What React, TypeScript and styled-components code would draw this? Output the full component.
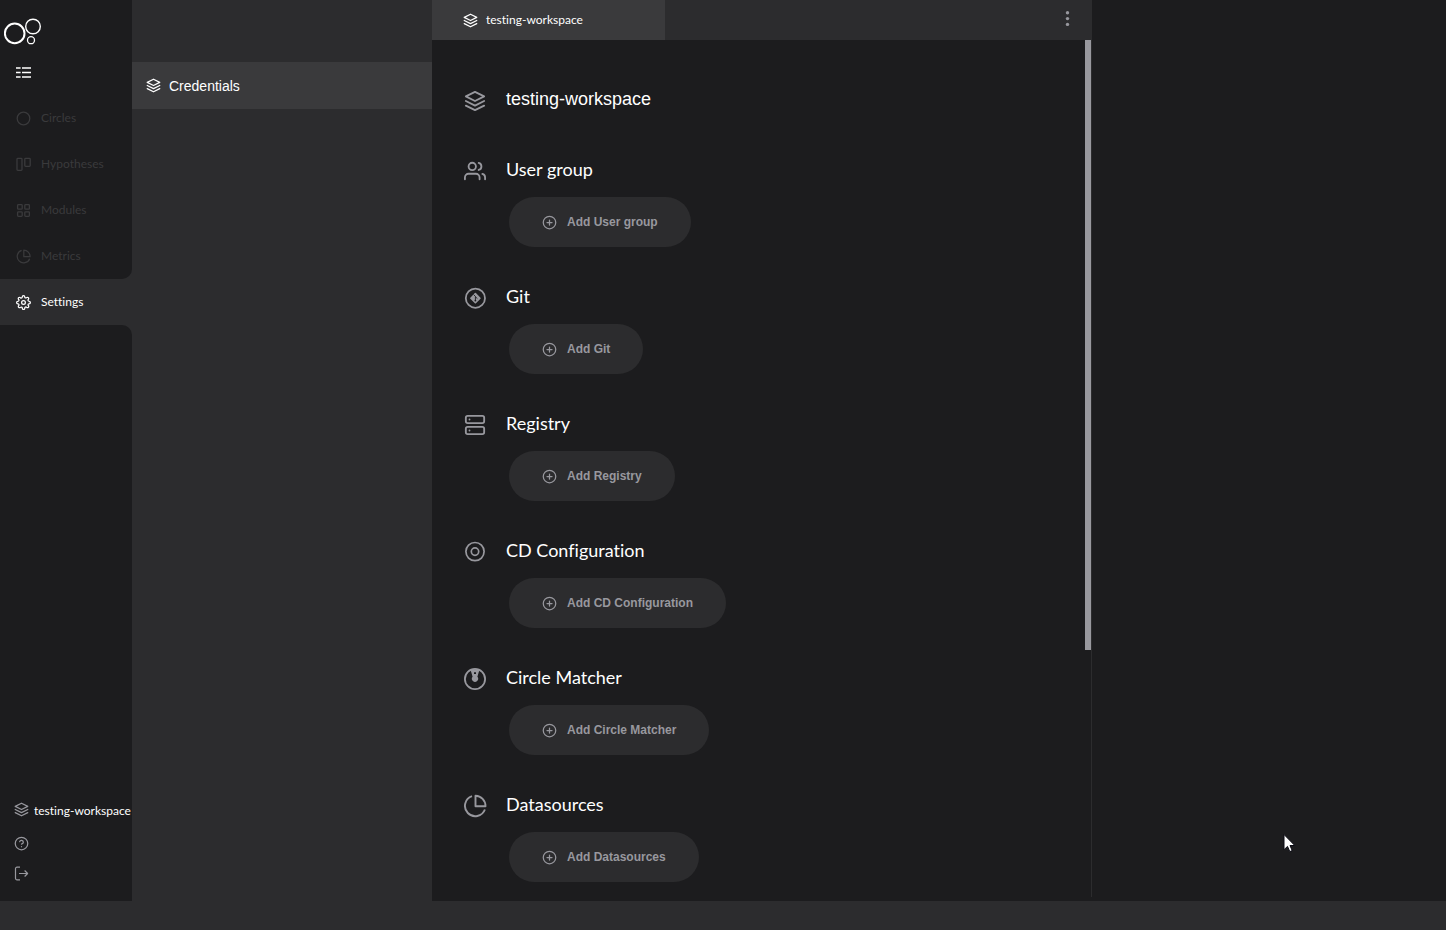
import React from 'react';
import styled, { createGlobalStyle } from 'styled-components';
import {
  FiHelpCircle,
  FiLayers,
  FiPlusCircle,
  FiServer,
  FiSettings,
  FiUsers,
} from 'react-icons/fi';

const color = {
  base: '#1c1c1e',
  surface: '#2c2c2e',
  raised: '#3a3a3c',
  muted: '#98989e',
  text: '#ffffff',
};

const lato = `Lato, 'Liberation Sans', sans-serif`;
const arial = `'Liberation Sans', Arial, sans-serif`;

const GlobalStyle = createGlobalStyle`
  * { box-sizing: border-box; }
  body {
    margin: 0;
    background: ${color.surface};
    color: ${color.text};
    font-family: ${lato};
    font-variant-ligatures: none;
  }
  h1, h2, ul, p { margin: 0; padding: 0; font-weight: 400; }
  ul { list-style: none; }
  a { color: inherit; text-decoration: none; }
  button {
    border: 0;
    padding: 0;
    background: none;
    color: inherit;
    font-variant-ligatures: none;
    cursor: pointer;
  }
  svg { display: block; flex: none; }
`;

const Page = styled.div`
  display: flex;
  flex-direction: column;
  height: 100vh;
  overflow: hidden;
`;

const Workspace = styled.div`
  display: flex;
  flex: 1;
  min-height: 0;
`;

const StatusBar = styled.footer`
  height: 29px;
  flex: none;
  background: ${color.surface};
`;

const Sidebar = styled.aside`
  display: flex;
  flex-direction: column;
  width: 132px;
  flex: none;
  background: ${color.surface};
`;

const Brand = styled.div`
  height: 95px;
  padding: 18px 4px 0;
  background: ${color.base};
`;

const MenuToggle = styled.button`
  display: block;
  margin: 20px 12px 0;
`;

const NavLink = styled.a<{ $active?: boolean; $rounded?: boolean }>`
  display: flex;
  align-items: center;
  gap: 10px;
  height: 46px;
  padding: 0 16px;
  font-size: 12px;
  line-height: 16px;
  border-bottom-right-radius: ${({ $rounded }) => ($rounded ? '10px' : '0')};
  background: ${({ $active }) => ($active ? color.surface : color.base)};
  && { color: ${({ $active }) => ($active ? color.text : color.raised)}; }
`;

const SidebarFooter = styled.div`
  display: flex;
  flex: 1;
  flex-direction: column;
  justify-content: flex-end;
  gap: 15px;
  padding: 0 0 20px 14px;
  border-top-right-radius: 10px;
  background: ${color.base};
  color: ${color.muted};
`;

const CurrentWorkspace = styled.a`
  display: flex;
  align-items: flex-start;
  gap: 5px;
  height: 19px;
  font-size: 12px;
  line-height: 18px;
  white-space: nowrap;
`;

const Label = styled.span`
  color: ${color.text};
`;

const IconButton = styled.button`
  display: flex;
  width: 15px;
  height: 15px;
`;

const Submenu = styled.nav`
  width: 300px;
  flex: none;
  padding-top: 62px;
  background: ${color.surface};
`;

const SubmenuLink = styled.a`
  display: flex;
  align-items: center;
  gap: 8px;
  height: 47px;
  padding: 0 14px;
  background: ${color.raised};
  font-family: ${arial};
  font-size: 14px;
  line-height: 16px;
`;

const Content = styled.main`
  flex: 1;
  min-width: 0;
  padding-bottom: 4px;
  background: ${color.base};
`;

const Panel = styled.section`
  display: flex;
  flex-direction: column;
  width: 660px;
  max-width: 100%;
  height: 100%;
`;

const TabBar = styled.header`
  display: flex;
  align-items: center;
  justify-content: space-between;
  height: 40px;
  flex: none;
  padding-right: 17px;
  background: ${color.surface};
`;

const Tab = styled.button`
  display: flex;
  align-items: center;
  gap: 8px;
  width: 233px;
  height: 40px;
  && { padding: 0 31px; background: ${color.raised}; }
  font-family: ${lato};
  font-size: 12px;
  line-height: 16px;
`;

const PanelBody = styled.div`
  display: flex;
  flex: 1;
  min-height: 0;
  border-right: 1px solid ${color.surface};
`;

const Sections = styled.div`
  display: flex;
  flex: 1;
  flex-direction: column;
  gap: 39px;
  padding: 49px 31px 0;
  overflow: hidden;
`;

const ScrollTrack = styled.div`
  width: 6px;
  flex: none;
`;

const ScrollThumb = styled.div`
  height: 71.2%;
  background: ${color.muted};
`;

const TitleRow = styled.div<{ $lead?: boolean }>`
  display: flex;
  align-items: center;
  gap: 19px;
  height: 24px;
  margin-bottom: ${({ $lead }) => ($lead ? '7px' : '0')};
  color: ${color.muted};
`;

const IconSlot = styled.span`
  display: flex;
  align-items: center;
  justify-content: center;
  width: 24px;
  height: 24px;
`;

const Title = styled.h2<{ $plain?: boolean }>`
  padding-bottom: 4px;
  color: ${color.text};
  font-family: ${({ $plain }) => ($plain ? arial : lato)};
  font-size: 18px;
  line-height: 22px;
`;

const AddButton = styled.button`
  display: flex;
  align-items: center;
  gap: 10px;
  height: 50px;
  margin: 14px 0 0 46px;
  && { padding: 0 33px; background: ${color.surface}; color: ${color.muted}; }
  border-radius: 25px;
  font-family: ${arial};
  font-size: 12px;
  font-weight: 700;
  line-height: 16px;
`;

const Pointer = styled.svg`
  position: absolute;
  left: 1283px;
  top: 833px;
`;

const Logo = () => (
  <svg width="38" height="28" viewBox="0 0 38 28" fill="none" stroke="#fff" role="img" aria-label="Home">
    <circle cx="10.7" cy="15.4" r="9.8" strokeWidth="2" />
    <circle cx="29" cy="8.5" r="7.3" strokeWidth="1.4" />
    <circle cx="27" cy="22.2" r="3.5" strokeWidth="1.3" />
  </svg>
);

const ListIcon = () => (
  <svg width="15" height="13" viewBox="0 0 15 13" stroke="#fff" strokeWidth="1.3">
    <path d="M0 2h4.6M6 2h9M0 6.5h4.6M6 6.5h9M0 11h4.6M6 11h9" />
  </svg>
);

const CirclesIcon = () => (
  <svg width="15" height="15" viewBox="0 0 15 15" fill="none" stroke="currentColor" strokeWidth="1.3">
    <circle cx="7.5" cy="7.5" r="6.3" />
  </svg>
);

const BoardIcon = () => (
  <svg width="15" height="15" viewBox="0 0 15 15" fill="none" stroke="currentColor" strokeWidth="1.3">
    <rect x="1" y="1.4" width="5" height="12" rx="0.8" />
    <rect x="8.8" y="1.4" width="5.4" height="8" rx="0.8" />
  </svg>
);

const ModulesIcon = () => (
  <svg width="15" height="15" viewBox="0 0 15 15" fill="none" stroke="currentColor" strokeWidth="1.3">
    <rect x="1.6" y="1.6" width="4.6" height="4.6" rx="0.8" />
    <rect x="8.8" y="1.6" width="4.6" height="4.6" rx="0.8" />
    <rect x="1.6" y="8.8" width="4.6" height="4.6" rx="0.8" />
    <rect x="8.8" y="8.8" width="4.6" height="4.6" rx="0.8" />
  </svg>
);

const PieIcon = ({ size, weight }: { size: number; weight: number }) => (
  <svg width={size} height={size} viewBox="0 0 24 24" fill="none" stroke="currentColor" strokeWidth={weight} strokeLinejoin="round">
    <path d="M9 2.1A10.3 10.3 0 1 0 21.9 15.5" />
    <path d="M12.5 1.8v10.4h10A10.3 10.3 0 0 0 12.5 1.8z" />
  </svg>
);

const LogoutIcon = () => (
  <svg width="15" height="15" viewBox="0 0 15 15" fill="none" stroke="currentColor" strokeWidth="1.2" strokeLinejoin="round">
    <path d="M6 1.2H3a1.5 1.5 0 0 0-1.5 1.5v9.6A1.5 1.5 0 0 0 3 13.8h3M5 7.5h8.6M10.6 4.5l3 3-3 3" />
  </svg>
);

const DiscIcon = () => (
  <svg width="24" height="24" viewBox="0 0 24 24" fill="none" stroke="currentColor" strokeWidth="1.7">
    <circle cx="12" cy="11.6" r="9.1" />
    <circle cx="12" cy="11.6" r="3.7" />
  </svg>
);

const GitIcon = () => (
  <svg width="24" height="24" viewBox="0 0 24 24" fill="none" stroke="currentColor">
    <circle cx="12.4" cy="12.2" r="9.6" strokeWidth="1.8" />
    <rect x="8.4" y="8.2" width="8" height="8" rx="0.8" transform="rotate(45 12.4 12.2)" fill="currentColor" stroke="none" />
    <path d="M10.6 8.6l1.8 1.8v4.4M12.4 10.8l2 1.8" stroke={color.base} strokeWidth="0.9" />
    <circle cx="12.4" cy="14.6" r="0.9" fill={color.base} stroke="none" />
  </svg>
);

const MatcherIcon = () => (
  <svg width="24" height="24" viewBox="0 0 24 24" fill="none" stroke="currentColor">
    <circle cx="12" cy="12" r="10.1" strokeWidth="1.8" />
    <path d="M7.4 2.2h9.2l-2.2 7.6a3.1 3.1 0 1 1-4.8 0z" fill="currentColor" stroke="none" />
    <path d="M11 5.2h2v1.8h-2z" fill={color.base} stroke="none" />
  </svg>
);

const MoreIcon = () => (
  <svg width="15" height="18" viewBox="0 0 15 18" fill={color.muted}>
    <circle cx="7.5" cy="1.7" r="1.7" />
    <circle cx="7.5" cy="7.6" r="1.7" />
    <circle cx="7.5" cy="13.4" r="1.7" />
  </svg>
);

const navItems = [
  { label: 'Circles', icon: <CirclesIcon /> },
  { label: 'Hypotheses', icon: <BoardIcon /> },
  { label: 'Modules', icon: <ModulesIcon /> },
  { label: 'Metrics', icon: <PieIcon size={15} weight={2} />, rounded: true },
  { label: 'Settings', icon: <FiSettings size={15} />, active: true },
];

const sections = [
  { label: 'User group', icon: <FiUsers size={22} /> },
  { label: 'Git', icon: <GitIcon /> },
  { label: 'Registry', icon: <FiServer size={22} /> },
  { label: 'CD Configuration', icon: <DiscIcon /> },
  { label: 'Circle Matcher', icon: <MatcherIcon /> },
  { label: 'Datasources', icon: <PieIcon size={24} weight={1.9} /> },
];

export default function App() {
  return (
    <Page>
      <GlobalStyle />
      <Workspace>
        <Sidebar>
          <Brand>
            <Logo />
            <MenuToggle type="button" aria-label="Toggle menu">
              <ListIcon />
            </MenuToggle>
          </Brand>
          <nav aria-label="Main">
            <ul>
              {navItems.map(({ label, icon, active, rounded }) => (
                <li key={label}>
                  <NavLink href="#" $active={active} $rounded={rounded}>
                    {icon}
                    {label}
                  </NavLink>
                </li>
              ))}
            </ul>
          </nav>
          <SidebarFooter>
            <CurrentWorkspace href="#">
              <FiLayers size={15} />
              <Label>testing-workspace</Label>
            </CurrentWorkspace>
            <IconButton type="button" aria-label="Help">
              <FiHelpCircle size={15} />
            </IconButton>
            <IconButton type="button" aria-label="Log out">
              <LogoutIcon />
            </IconButton>
          </SidebarFooter>
        </Sidebar>

        <Submenu aria-label="Settings">
          <SubmenuLink href="#">
            <FiLayers size={15} />
            Credentials
          </SubmenuLink>
        </Submenu>

        <Content>
          <Panel>
            <TabBar>
              <Tab type="button">
                <FiLayers size={15} />
                testing-workspace
              </Tab>
              <button type="button" aria-label="More options">
                <MoreIcon />
              </button>
            </TabBar>
            <PanelBody>
              <Sections>
                <TitleRow $lead>
                  <IconSlot>
                    <FiLayers size={22} />
                  </IconSlot>
                  <Title as="h1" $plain>
                    testing-workspace
                  </Title>
                </TitleRow>
                {sections.map(({ label, icon }) => (
                  <section key={label}>
                    <TitleRow>
                      <IconSlot>{icon}</IconSlot>
                      <Title>{label}</Title>
                    </TitleRow>
                    <AddButton type="button">
                      <FiPlusCircle size={15} />
                      Add {label}
                    </AddButton>
                  </section>
                ))}
              </Sections>
              <ScrollTrack>
                <ScrollThumb />
              </ScrollTrack>
            </PanelBody>
          </Panel>
        </Content>
      </Workspace>
      <StatusBar />
      <Pointer width="14" height="22" viewBox="0 0 14 22" aria-hidden="true">
        <path
          d="M1 1.5v15.2l3.5-3.3 2.3 5.2 2.4-1-2.2-5.1h4.8z"
          fill="#fff"
          stroke="#0b0b14"
          strokeWidth="1"
        />
      </Pointer>
    </Page>
  );
}
